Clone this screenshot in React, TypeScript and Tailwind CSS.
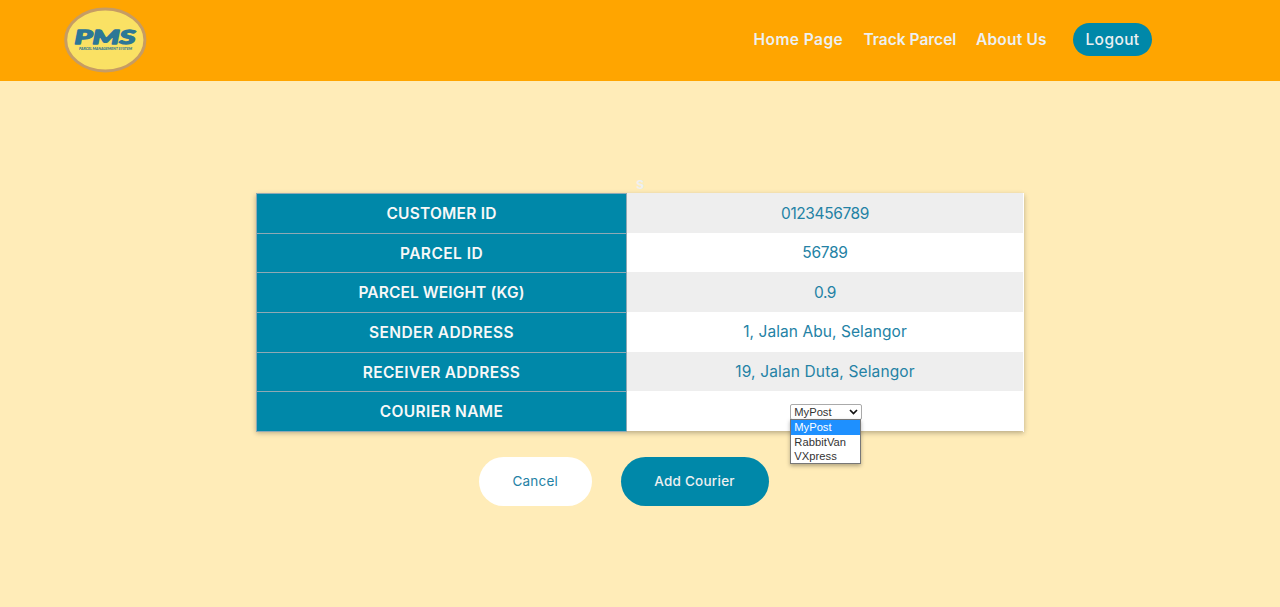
import React from "react";

const rows = [
  { label: "CUSTOMER ID", value: "0123456789", labelClass: "tracking-[0.22px]", valueClass: "tracking-[-0.4px]" },
  { label: "PARCEL ID", value: "56789", labelClass: "tracking-[0.45px]", valueClass: "tracking-[-0.3px]" },
  { label: "PARCEL WEIGHT (KG)", value: "0.9", labelClass: "tracking-[0.12px]", valueClass: "tracking-[-0.4px]" },
  { label: "SENDER ADDRESS", value: "1, Jalan Abu, Selangor", labelClass: "tracking-[0.42px]", valueClass: "tracking-[0.07px]" },
  { label: "RECEIVER ADDRESS", value: "19, Jalan Duta, Selangor", labelClass: "tracking-[0.3px]", valueClass: "tracking-[0.14px]" },
  { label: "COURIER NAME", value: "", labelClass: "tracking-[0.35px]", valueClass: "" },
];

function Logo() {
  return (
    <svg className="block h-[66px] w-[84px]" viewBox="0 0 84 66" role="img" aria-label="PMS">
      <ellipse cx="42.3" cy="33" rx="39.6" ry="31" fill="#fae164" stroke="#c69c64" strokeWidth="3" />
      <g fill="#2d7796" fontFamily="Lato, 'Liberation Sans', sans-serif" fontStyle="italic" strokeLinejoin="round">
        <text x="11.5" y="37.2" fontSize="19.5" fontWeight="700" textLength="61" lengthAdjust="spacingAndGlyphs" stroke="#2d7796" strokeWidth="1.5">PMS</text>
        <text x="16" y="43.3" fontSize="2.8" fontWeight="900" textLength="53" lengthAdjust="spacingAndGlyphs">PARCEL MANAGEMENT SYSTEM</text>
      </g>
    </svg>
  );
}

function CourierSelect() {
  return (
    <div className="mt-px ml-[1.5px] h-4 w-[72px] font-['Liberation_Sans',sans-serif] text-[11.2px] text-[#333]">
      <div className="relative flex h-4 items-center justify-between rounded-[2px] border border-[#aaa] bg-white pr-[3px] pl-[3.5px] leading-[14px]">
        <span>MyPost</span>
        <svg className="h-[6px] w-[9px]" viewBox="0 0 9 6" fill="none" stroke="#111" strokeWidth="1.7">
          <path d="M1 1l3.5 3.5L8 1" />
        </svg>
        <ul className="absolute top-[14px] -left-px z-10 w-[71px] border border-[#777] bg-white leading-[14.3px] shadow-[0_2px_4px_rgba(0,0,0,0.3)]">
          <li className="bg-[#1e90ff] pl-[3.5px] text-white">MyPost</li>
          <li className="pl-[3.5px] tracking-[0.05px]">RabbitVan</li>
          <li className="pl-[3.5px] tracking-[0.05px]">VXpress</li>
        </ul>
      </div>
    </div>
  );
}

export default function App() {
  return (
    <div className="h-[607px] overflow-hidden bg-[#ffecb8] font-['Inter',sans-serif]">
      <header className="flex h-[81px] items-start justify-between bg-[#ffa500] pr-32 pl-[63px]">
        <div className="pt-[7px]"><Logo /></div>
        <nav className="flex items-center pt-[23px] text-[15.5px] leading-[33px] font-semibold text-[#edf0f1]">
          <a className="w-[110px] tracking-[0.45px] whitespace-nowrap">Home Page</a>
          <a className="w-[112.5px] whitespace-nowrap">Track Parcel</a>
          <a className="w-[97px] tracking-[0.2px] whitespace-nowrap">About Us</a>
          <button className="h-[33px] w-[79px] rounded-full bg-[#0088a9] font-medium tracking-[0.4px]">Logout</button>
        </nav>
      </header>

      <main className="flex flex-col items-center pt-[94px]">
        <span className="h-[18px] text-[15px] leading-[17px] font-semibold text-[#edf0f1]">s</span>
        <div className="w-[768px] bg-white shadow-[0_2px_5px_rgba(0,0,0,0.28)]">
          {rows.map((row, i) => (
            <div
              key={row.label}
              className={`grid h-[39.67px] grid-cols-[371px_397px] text-[15.5px] leading-[39px] ${i % 2 === 0 ? "bg-[#eeeeee]" : "bg-white"}`}
            >
              <div className={`border border-[#8fa9b4] bg-[#0088a9] text-center font-semibold text-[#f8f8f8] ${i < 5 ? "border-b-0" : ""} ${row.labelClass}`}>
                {row.label}
              </div>
              <div className={`flex items-center justify-center border-r border-white text-[#2482a5] ${row.valueClass}`}>
                {row.value || <CourierSelect />}
              </div>
            </div>
          ))}
        </div>
        <div className="mt-[26px] flex gap-[29px] text-[13.5px] font-medium">
          <button className="h-[49px] w-[112.5px] rounded-full bg-white font-normal tracking-[0.2px] text-[#2482a5]">Cancel</button>
          <button className="mr-[32.5px] h-[49px] w-[148px] rounded-full bg-[#0088a9] tracking-[0.25px] text-[#edf0f1]">Add Courier</button>
        </div>
      </main>
    </div>
  );
}
